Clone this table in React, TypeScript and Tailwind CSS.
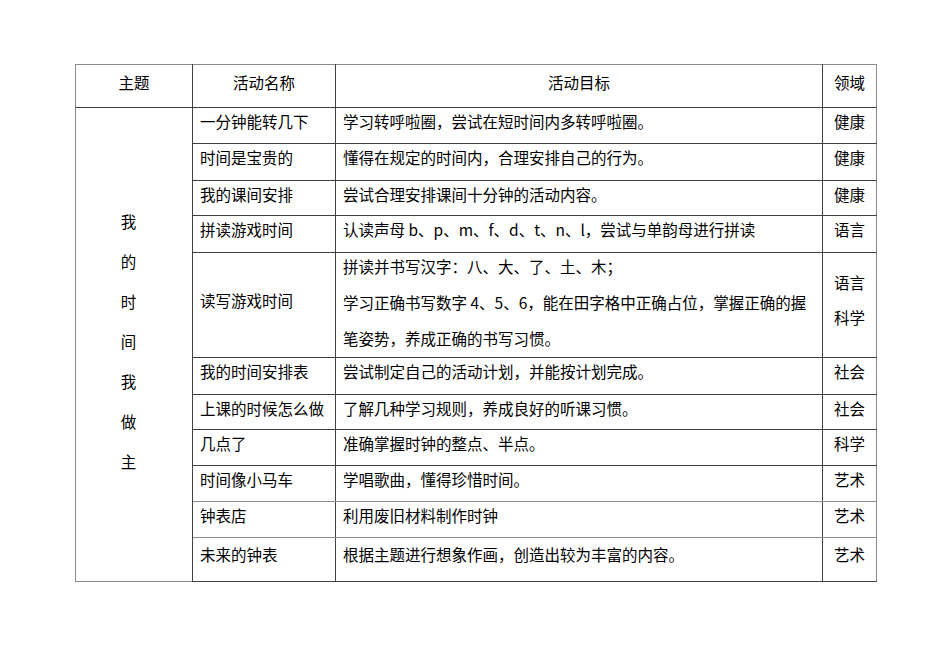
import React from 'react';

type Row = {
  name: string;
  goal: string[];
  area: string[];
  h: string;
  middle?: boolean;
  lineClass?: string;
  pad?: string;
};

const rows: Row[] = [
  { name: '一分钟能转几下', goal: ['学习转呼啦圈，尝试在短时间内多转呼啦圈。'], area: ['健康'], h: 'h-[36px]' },
  { name: '时间是宝贵的', goal: ['懂得在规定的时间内，合理安排自己的行为。'], area: ['健康'], h: 'h-[37px]' },
  { name: '我的课间安排', goal: ['尝试合理安排课间十分钟的活动内容。'], area: ['健康'], h: 'h-[35px]' },
  { name: '拼读游戏时间', goal: ['认读声母 b、p、m、f、d、t、n、l，尝试与单韵母进行拼读'], area: ['语言'], h: 'h-[37px]' },
  {
    name: '读写游戏时间',
    goal: [
      '拼读并书写汉字：八、大、了、土、木；',
      '学习正确书写数字 4、5、6，能在田字格中正确占位，掌握正确的握',
      '笔姿势，养成正确的书写习惯。',
    ],
    area: ['语言', '科学'],
    h: 'h-[105px]',
    middle: true,
  },
  { name: '我的时间安排表', goal: ['尝试制定自己的活动计划，并能按计划完成。'], area: ['社会'], h: 'h-[37px]' },
  { name: '上课的时候怎么做', goal: ['了解几种学习规则，养成良好的听课习惯。'], area: ['社会'], h: 'h-[35px]' },
  { name: '几点了', goal: ['准确掌握时钟的整点、半点。'], area: ['科学'], h: 'h-[36px]' },
  { name: '时间像小马车', goal: ['学唱歌曲，懂得珍惜时间。'], area: ['艺术'], h: 'h-[36px]', lineClass: 'border-b-[#8c8c8c]' },
  { name: '钟表店', goal: ['利用废旧材料制作时钟'], area: ['艺术'], h: 'h-[36px]', lineClass: 'border-b-[#8c8c8c]' },
  { name: '未来的钟表', goal: ['根据主题进行想象作画，创造出较为丰富的内容。'], area: ['艺术'], h: 'h-[44px]', pad: 'pt-[3px]' },
];

const theme = ['我', '的', '时', '间', '我', '做', '主'];

export default function App() {
  return (
    <div
      className="w-[950px] h-[672px] bg-white pt-[64px] pl-[75px] text-[15.5px] text-black"
      style={{ fontFamily: '"Noto Sans CJK SC", "Noto Sans", sans-serif' }}
    >
      <table className="w-[801px] table-fixed border-collapse border border-[#8a8a8a]">
        <colgroup>
          <col className="w-[117px]" />
          <col className="w-[143px]" />
          <col className="w-[487px]" />
          <col className="w-[54px]" />
        </colgroup>
        <thead>
          <tr className="h-[43px]">
            <th className="p-0 pt-[4px] border-r border-b border-[#404040] align-top font-normal">
              <div className="leading-[26px]">主题</div>
            </th>
            <th className="p-0 pt-[4px] border-r border-b border-[#404040] align-top font-normal">
              <div className="leading-[26px]">活动名称</div>
            </th>
            <th className="p-0 pt-[4px] border-r border-b border-[#404040] align-top font-normal">
              <div className="leading-[26px]">活动目标</div>
            </th>
            <th className="p-0 pt-[4px] border-b border-[#404040] align-top font-normal">
              <div className="leading-[26px]">领域</div>
            </th>
          </tr>
        </thead>
        <tbody>
          {rows.map((r, i) => (
            <tr key={i} className={r.h}>
              {i === 0 && (
                <td rowSpan={rows.length} className="p-0 border-r border-[#404040] align-middle">
                  <div className="flex flex-col items-center pr-[11px] leading-[40px] -translate-y-[4px]">
                    {theme.map((c, j) => (
                      <span key={j}>{c}</span>
                    ))}
                  </div>
                </td>
              )}
              <td
                className={`p-0 px-[7px] border-r border-b border-[#404040] ${r.middle ? 'align-middle' : 'align-top'} ${r.lineClass ?? ''} ${r.pad ?? ''}`}
              >
                <div className={`leading-[26px] whitespace-nowrap ${r.middle ? '-translate-y-[5px]' : ''}`}>{r.name}</div>
              </td>
              <td className={`p-0 px-[7px] border-r border-b border-[#404040] align-top ${r.lineClass ?? ''} ${r.pad ?? ''}`}>
                <div className="flex flex-col gap-[10px] leading-[26px] whitespace-nowrap">
                  {r.goal.map((g, j) => (
                    <span key={j}>{g}</span>
                  ))}
                </div>
              </td>
              <td
                className={`p-0 border-b border-[#404040] text-center ${r.middle ? 'align-middle' : 'align-top'} ${r.lineClass ?? ''} ${r.pad ?? ''}`}
              >
                <div className={`flex flex-col items-center gap-[9px] leading-[26px] ${r.middle ? '-translate-y-[6px]' : ''}`}>
                  {r.area.map((a, j) => (
                    <span key={j}>{a}</span>
                  ))}
                </div>
              </td>
            </tr>
          ))}
        </tbody>
      </table>
    </div>
  );
}
